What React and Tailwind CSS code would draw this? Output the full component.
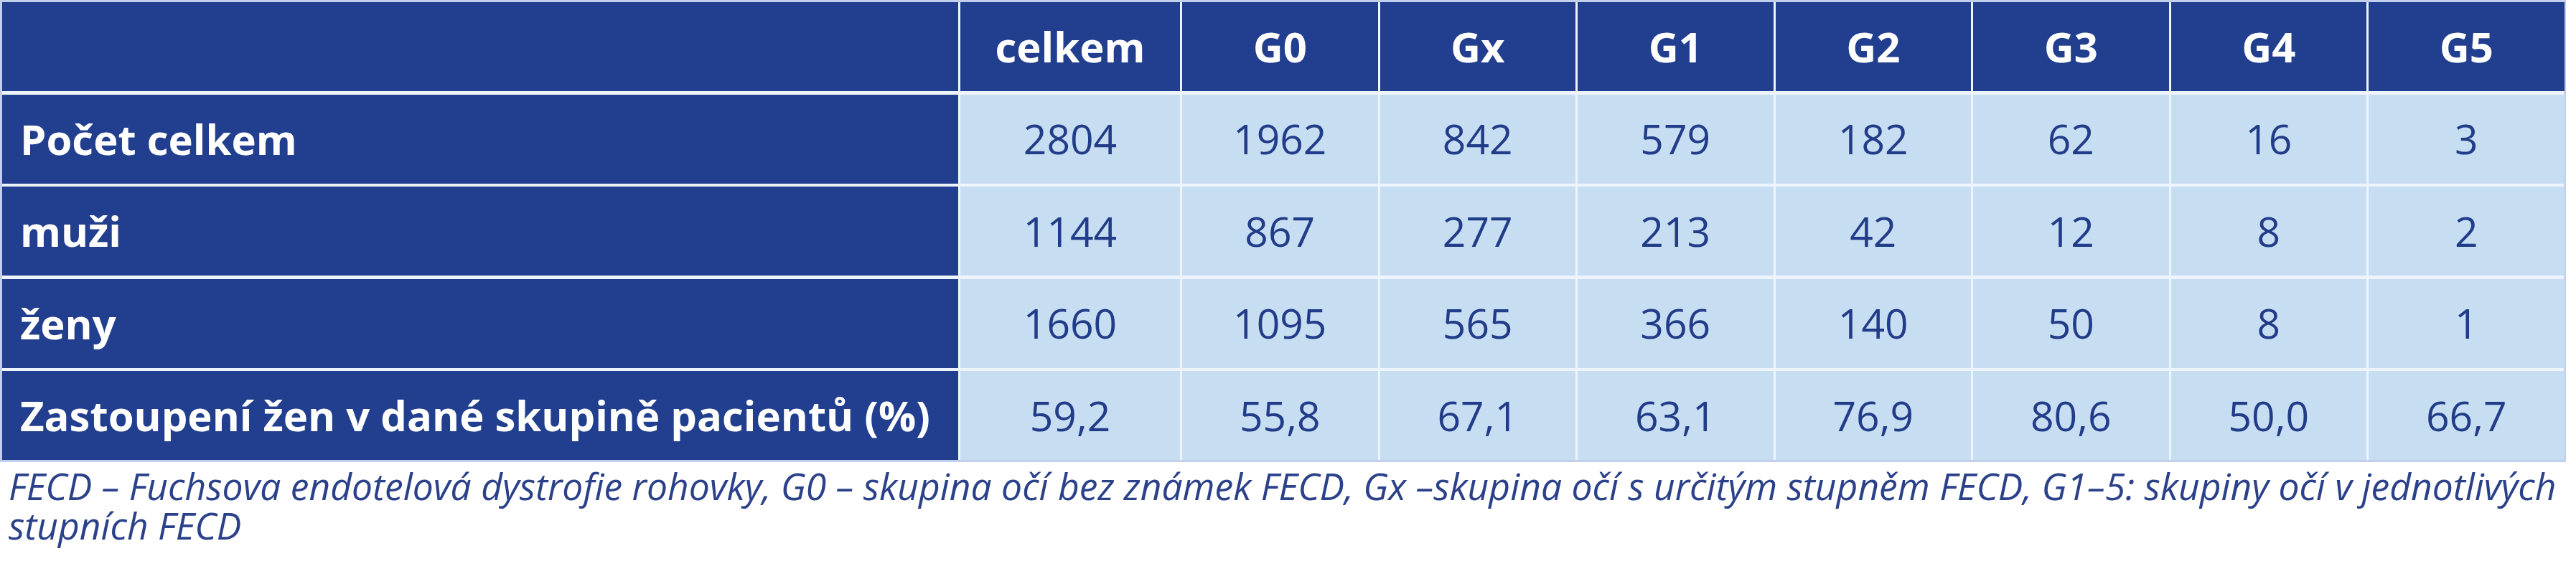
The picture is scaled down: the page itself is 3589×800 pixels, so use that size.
import React from "react";

const columns = ["celkem", "G0", "Gx", "G1", "G2", "G3", "G4", "G5"];

const rows = [
  { label: "Počet celkem", values: ["2804", "1962", "842", "579", "182", "62", "16", "3"] },
  { label: "muži", values: ["1144", "867", "277", "213", "42", "12", "8", "2"] },
  { label: "ženy", values: ["1660", "1095", "565", "366", "140", "50", "8", "1"] },
  {
    label: "Zastoupení žen v dané skupině pacientů (%)",
    values: ["59,2", "55,8", "67,1", "63,1", "76,9", "80,6", "50,0", "66,7"],
  },
];

export default function App() {
  return (
    <div className="w-[3589px] h-[800px] bg-white font-['Open_Sans',sans-serif]">
      <div className="w-[3575px] border-[3px] border-[#c2cfee] bg-[#eef4fc]">
        <div className="grid grid-cols-[1332px_306px_repeat(7,272.5px)] auto-rows-[124px] gap-x-[3px] gap-y-[4.5px]">
          <div className="bg-[#213f8e]" />
          {columns.map((c) => (
            <div
              key={c}
              className="bg-[#213f8e] flex items-center justify-center text-white font-bold text-[58px] leading-none"
            >
              {c}
            </div>
          ))}

          {rows.map((row) => (
            <React.Fragment key={row.label}>
              <div className="bg-[#213f8e] flex items-center pl-[25px] text-white font-bold text-[58px] leading-none whitespace-nowrap">
                {row.label}
              </div>
              {row.values.map((v, i) => (
                <div
                  key={i}
                  className="bg-[#c7ddf2] flex items-center justify-center text-[#213c88] text-[57px] leading-none"
                >
                  {v}
                </div>
              ))}
            </React.Fragment>
          ))}
        </div>
      </div>

      <div className="pl-[12px] pt-[6px] italic text-[51.6px] leading-[55px] text-[#2b4189] whitespace-nowrap">
        <p>
          FECD – Fuchsova endotelová dystrofie rohovky, G0 – skupina očí bez známek FECD, Gx –skupina očí s určitým stupněm FECD, G1–5: skupiny očí v jednotlivých
        </p>
        <p>stupních FECD</p>
      </div>
    </div>
  );
}
